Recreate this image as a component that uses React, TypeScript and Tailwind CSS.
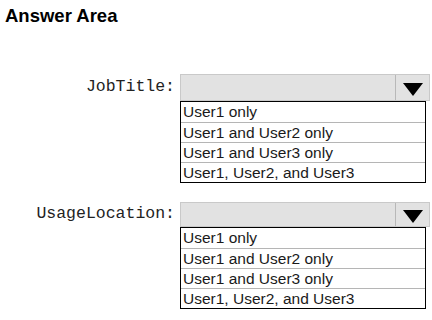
const options = [
  "User1 only",
  "User1 and User2 only",
  "User1 and User3 only",
  "User1, User2, and User3",
];

function Dropdown({ label, tall }: { label: string; tall?: boolean }) {
  return (
    <div className="flex items-start">
      <div
        className={`flex w-[176px] items-center justify-end pr-[1px] font-['Liberation_Mono',monospace] text-[16.5px] text-[#222] ${
          tall ? "h-[27px]" : "h-[25px]"
        }`}
      >
        {label}
      </div>
      <div className="ml-[4px] w-[250px]">
        <div
          className={`flex border border-[#c9c9c9] bg-[#e2e2e2] ${
            tall ? "h-[27px]" : "h-[25px]"
          }`}
        >
          <div className="flex-1" />
          <div className="flex w-[34px] items-center justify-center border-l border-[#b8b8b8] pt-[4px]">
            <div className="h-0 w-0 border-l-[10px] border-r-[10px] border-t-[13px] border-l-transparent border-r-transparent border-t-black" />
          </div>
        </div>
        <div className="w-[246px] border border-black bg-white">
          {options.map((option, i) => (
            <div
              key={option}
              className={`flex h-[20px] items-center pl-[2px] font-['Liberation_Sans',Arial,sans-serif] text-[15.5px] leading-none text-[#1a1a1a] ${
                i > 0 ? "border-t border-[#b5b5b5]" : ""
              }`}
            >
              {option}
            </div>
          ))}
        </div>
      </div>
    </div>
  );
}

export default function App() {
  return (
    <div className="h-[320px] w-[432px] overflow-hidden bg-white">
      <h1 className="pl-[5px] pt-[5px] font-['Liberation_Sans',Arial,sans-serif] text-[18.5px] font-bold leading-[22px] text-black">
        Answer Area
      </h1>
      <div className="mt-[47px]">
        <Dropdown label="JobTitle:" tall />
      </div>
      <div className="mt-[19px]">
        <Dropdown label="UsageLocation:" />
      </div>
    </div>
  );
}
